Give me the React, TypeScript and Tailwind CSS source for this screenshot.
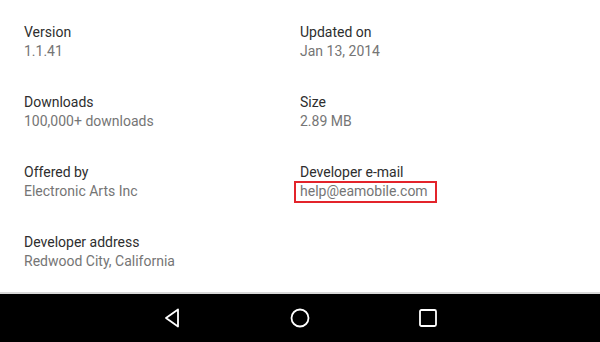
import React from "react";

const details = [
  { label: "Version", value: "1.1.41" },
  { label: "Updated on", value: "Jan 13, 2014" },
  { label: "Downloads", value: "100,000+ downloads" },
  { label: "Size", value: "2.89 MB" },
  { label: "Offered by", value: "Electronic Arts Inc" },
  { label: "Developer e-mail", value: "help@eamobile.com", highlight: true },
  { label: "Developer address", value: "Redwood City, California" },
];

const DetailItem = ({
  label,
  value,
  highlight,
}: {
  label: string;
  value: string;
  highlight?: boolean;
}) => (
  <div className="flex flex-col">
    <span className="text-[14px] leading-[19px] text-[#2e2e2e]">{label}</span>
    <span className="relative w-fit text-[14px] leading-[19px] text-[#757575]">
      {value}
      {highlight && (
        <span className="absolute -bottom-[2px] -left-[6px] -right-[9px] -top-[1px] border-2 border-[#e3242b]" />
      )}
    </span>
  </div>
);

export default function App() {
  return (
    <div className="flex h-[342px] w-[600px] flex-col overflow-hidden bg-white font-['Roboto','Liberation_Sans',sans-serif]">
      {/* Details grid */}
      <div className="grid flex-1 grid-cols-[276px_1fr] content-start gap-y-[32px] pl-[24px] pt-[23px]">
        {details.map((d) => (
          <DetailItem key={d.label} {...d} />
        ))}
      </div>

      {/* Navigation bar */}
      <div className="h-[2px] bg-[#d8d8d8]" />
      <div className="flex h-[48px] items-center justify-center bg-black">
        <div className="flex w-[128px] justify-center">
          <svg width="16" height="20" viewBox="0 0 16 20" fill="none">
            <path
              d="M14 1.5 L2 10 L14 18.5 Z"
              stroke="white"
              strokeWidth="1.8"
              strokeLinejoin="round"
            />
          </svg>
        </div>
        <div className="flex w-[128px] justify-center">
          <svg width="20" height="20" viewBox="0 0 20 20" fill="none">
            <circle cx="10" cy="10" r="8.5" stroke="white" strokeWidth="1.8" />
          </svg>
        </div>
        <div className="flex w-[128px] justify-center">
          <svg width="18" height="18" viewBox="0 0 18 18" fill="none">
            <rect x="1" y="1" width="16" height="16" rx="1.5" stroke="white" strokeWidth="1.8" />
          </svg>
        </div>
      </div>
    </div>
  );
}
